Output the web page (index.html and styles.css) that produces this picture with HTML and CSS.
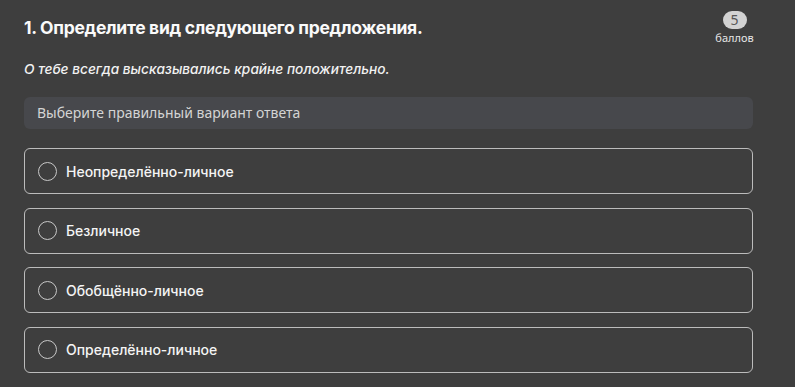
FILE: index.html
```html
<!DOCTYPE html>
<html lang="ru">
<head>
  <meta charset="UTF-8">
  <title>Вопрос 1</title>
  <link rel="stylesheet" href="styles.css">
</head>
<body>
  <div class="question">
    <div class="question-head">
      <h2 class="question-title">1. Определите вид следующего предложения.</h2>
      <div class="points">
        <span class="points-value">5</span>
        <span class="points-label">баллов</span>
      </div>
    </div>
    <p class="question-text">О тебе всегда высказывались крайне положительно.</p>
    <div class="hint">Выберите правильный вариант ответа</div>
    <ul class="options">
      <li class="option"><span class="radio"></span>Неопределённо-личное</li>
      <li class="option"><span class="radio"></span>Безличное</li>
      <li class="option"><span class="radio"></span>Обобщённо-личное</li>
      <li class="option"><span class="radio"></span>Определённо-личное</li>
    </ul>
  </div>
</body>
</html>
```

FILE: styles.css
```css
body {
  margin: 0;
  background-color: #3e3e3e;
  font-family: 'Noto Sans', 'Open Sans', sans-serif;
  color: #f2f2f2;
}
.question {
  width: 729px;
  padding: 11px 0 0 24px;
}
.question-head {
  display: flex;
  justify-content: space-between;
  align-items: flex-start;
}
.question-title {
  margin: 6px 0 0;
  font-family: 'Inter', 'Noto Sans', sans-serif;
  font-size: 17.5px;
  font-weight: 700;
  letter-spacing: -0.3px;
  color: #fafafa;
}
.points {
  display: flex;
  flex-direction: column;
  align-items: center;
  width: 37px;
}
.points-value {
  width: 24px;
  height: 18px;
  border-radius: 9px;
  background-color: #d2d2d2;
  color: #555;
  font-size: 14px;
  line-height: 18px;
  text-align: center;
}
.points-label {
  margin-top: 1px;
  font-size: 11px;
  line-height: 16px;
  color: #e6e6e6;
}
.question-text {
  margin: 15px 0 0;
  font-family: 'Inter', 'Noto Sans', sans-serif;
  font-size: 13.7px;
  font-style: italic;
  font-weight: 500;
  color: #f2f2f2;
}
.hint {
  margin-top: 20px;
  height: 32px;
  padding-left: 13px;
  border-radius: 6px;
  background-color: #47484c;
  font-size: 14px;
  line-height: 32px;
  color: #d4d4d4;
}
.options {
  list-style: none;
  margin: 19px 0 0;
  padding: 0;
  display: flex;
  flex-direction: column;
  gap: 13.5px;
}
.option {
  display: flex;
  align-items: center;
  height: 44px;
  padding-left: 13px;
  border: 1px solid #bcbcbc;
  border-radius: 6px;
  font-family: 'Inter', 'Noto Sans', sans-serif;
  font-size: 14px;
  font-weight: 500;
  color: #f4f4f4;
}
.radio {
  width: 17px;
  height: 17px;
  margin-right: 9px;
  border: 1px solid #c8c8c8;
  border-radius: 50%;
}
```
